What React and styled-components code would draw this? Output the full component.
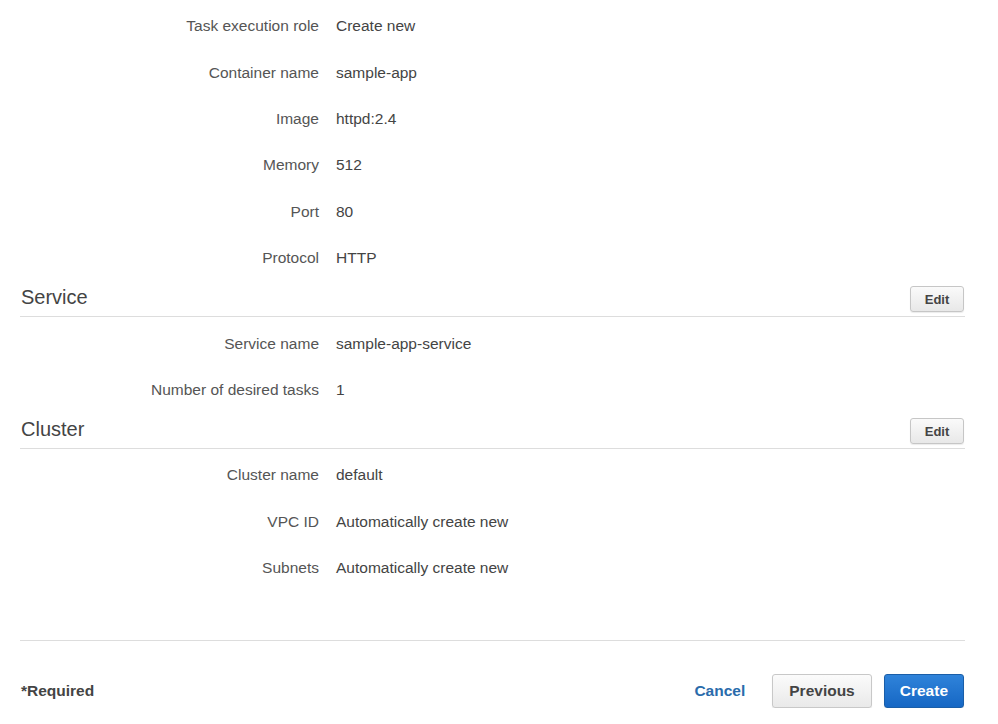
import React from 'react';
import styled, { createGlobalStyle } from 'styled-components';

const GlobalStyle = createGlobalStyle`
  body {
    margin: 0;
    background: #fff;
    font-family: "Liberation Sans", Arial, sans-serif;
    color: #444;
  }
`;

const Page = styled.div`
  width: 945px;
  padding: 3px 0 0 20px;
`;

const Row = styled.div`
  display: flex;
  align-items: center;
  height: 46.4px;
  font-size: 15.5px;
`;

const Label = styled.div`
  width: 299px;
  text-align: right;
  color: #555;
`;

const Value = styled.div`
  margin-left: 17px;
  color: #444;
`;

const SectionHeader = styled.div`
  display: flex;
  align-items: center;
  justify-content: space-between;
  height: 26px;
  padding: 5px 0 4px;
  border-bottom: 1px solid #ddd;
  margin-bottom: 3px;
`;

const SectionTitle = styled.h2`
  margin: -3px 0 0 1px;
  font-size: 20px;
  font-weight: normal;
  color: #444;
`;

const EditButton = styled.button`
  width: 54px;
  height: 26px;
  margin-right: 1px;
  font-family: inherit;
  font-size: 13px;
  font-weight: bold;
  color: #444;
  background: linear-gradient(#fafafa, #e8e8e8);
  border: 1px solid #c6c6c6;
  border-radius: 3px;
  box-shadow: 0 1px 1px rgba(0, 0, 0, 0.08);
`;

const Divider = styled.div`
  margin-top: 49px;
  border-top: 1px solid #ddd;
`;

const Footer = styled.div`
  display: flex;
  align-items: center;
  justify-content: space-between;
  padding-top: 33px;
`;

const Required = styled.div`
  margin-left: 1px;
  font-size: 15.5px;
  font-weight: bold;
  color: #444;
`;

const Actions = styled.div`
  display: flex;
  align-items: center;
`;

const CancelLink = styled.a`
  font-size: 15.5px;
  font-weight: bold;
  color: #2a6bab;
  margin-right: 27px;
  cursor: pointer;
`;

const Button = styled.button`
  height: 34px;
  padding: 0 ${(p) => (p.$primary ? '15px' : '16px')};
  margin-left: ${(p) => (p.$primary ? '11px' : '0')};
  margin-right: 1px;
  font-family: inherit;
  font-size: 15.5px;
  font-weight: bold;
  border-radius: 3px;
  color: ${(p) => (p.$primary ? '#fff' : '#444')};
  background: ${(p) =>
    p.$primary
      ? 'linear-gradient(#2f83da, #1667c4)'
      : 'linear-gradient(#fbfbfb, #e9e9e9)'};
  border: 1px solid ${(p) => (p.$primary ? '#1a5ea8' : '#c8c8c8')};
  box-shadow: 0 1px 1px rgba(0, 0, 0, 0.1);
`;

const Field = ({ label, value }) => (
  <Row>
    <Label>{label}</Label>
    <Value>{value}</Value>
  </Row>
);

const Section = ({ title }) => (
  <SectionHeader>
    <SectionTitle>{title}</SectionTitle>
    <EditButton>Edit</EditButton>
  </SectionHeader>
);

export default function App() {
  return (
    <>
      <GlobalStyle />
      <Page>
        <Field label="Task execution role" value="Create new" />
        <Field label="Container name" value="sample-app" />
        <Field label="Image" value="httpd:2.4" />
        <Field label="Memory" value="512" />
        <Field label="Port" value="80" />
        <Field label="Protocol" value="HTTP" />

        <Section title="Service" />
        <Field label="Service name" value="sample-app-service" />
        <Field label="Number of desired tasks" value="1" />

        <Section title="Cluster" />
        <Field label="Cluster name" value="default" />
        <Field label="VPC ID" value="Automatically create new" />
        <Field label="Subnets" value="Automatically create new" />

        <Divider />
        <Footer>
          <Required>*Required</Required>
          <Actions>
            <CancelLink>Cancel</CancelLink>
            <Button>Previous</Button>
            <Button $primary>Create</Button>
          </Actions>
        </Footer>
      </Page>
    </>
  );
}
